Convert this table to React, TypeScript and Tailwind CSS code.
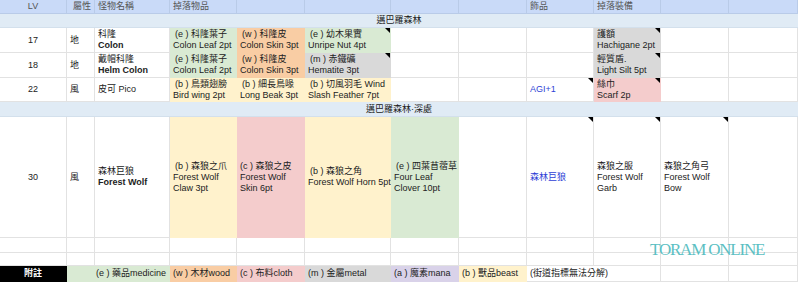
import { ReactNode } from "react";

// cell colours (bg + matching border so coloured blocks look seamless)
const W = "bg-white border-[#e2e2e2]";
const G = "bg-[#d9ead3] border-[#d9ead3]";
const O = "bg-[#f9cda4] border-[#f9cda4]";
const P = "bg-[#f4cccc] border-[#f4cccc]";
const Y = "bg-[#fff2cc] border-[#fff2cc]";
const S = "bg-[#d9d9d9] border-[#d9d9d9]";
const V = "bg-[#d9d2e9] border-[#d9d2e9]";
const H = "bg-[#c9daf8] border-[#b9cbe8]";

type CellProps = {
    children?: ReactNode;
    className?: string;
    note?: boolean;
};

function Cell({ children, className = W, note = false }: CellProps) {
    return (
        <div
            className={`relative flex items-center whitespace-nowrap border-r border-b px-[3px] ${className}`}
        >
            <div>{children}</div>
            {note && (
                <span className="absolute right-0 top-0 h-0 w-0 border-l-[5px] border-t-[5px] border-l-transparent border-t-black" />
            )}
        </div>
    );
}

function Item({ a, b }: { a: string; b: string }) {
    return (
        <>
            <div className="pl-[2px]">{a}</div>
            <div>{b}</div>
        </>
    );
}

function Blank({ n }: { n: number }) {
    return (
        <>
            {Array.from({ length: n }).map((_, i) => (
                <Cell key={i} />
            ))}
        </>
    );
}

export default function App() {
    return (
        <div className="relative h-[282px] w-[798px] overflow-hidden bg-white text-[9px] leading-[11px] text-[#222] [font-family:'Liberation_Sans','Noto_Sans_CJK_TC',sans-serif]">
            <div className="grid grid-cols-[67px_28px_75px_67px_68px_86px_68px_68px_67px_67px_68px_69px] grid-rows-[14px_14px_25px_25px_24px_15px_121px_15px_13px_16px]">
                {/* header */}
                <Cell className={`${H} justify-center text-[#555]`}>LV</Cell>
                <Cell className={`${H} text-[#555]`}>
                    <span className="pl-[3px]">屬性</span>
                </Cell>
                <Cell className={`${H} text-[#555]`}>怪物名稱</Cell>
                <Cell className={`${H} text-[#555]`}>掉落物品</Cell>
                <Cell className={H} />
                <Cell className={H} />
                <Cell className={H} />
                <Cell className={H} />
                <Cell className={`${H} text-[#555]`}>飾品</Cell>
                <Cell className={`${H} text-[#555]`}>掉落裝備</Cell>
                <Cell className={H} />
                <Cell className={H} />

                {/* section */}
                <div className="col-span-12 flex items-center justify-center border-b border-[#d3e0ec] bg-[#e0ebf5]">
                    邁巴羅森林
                </div>

                {/* 17 */}
                <Cell className={`${W} justify-center`}>17</Cell>
                <Cell className={`${W} text-[#222]`}>地</Cell>
                <Cell>
                    <div>科隆</div>
                    <div className="font-bold">Colon</div>
                </Cell>
                <Cell className={G}>
                    <Item a="(e ) 科隆葉子" b="Colon Leaf 2pt" />
                </Cell>
                <Cell className={O}>
                    <Item a="(w ) 科隆皮" b="Colon Skin 3pt" />
                </Cell>
                <Cell className={G} note>
                    <Item a="(e ) 幼木果實" b="Unripe Nut 4pt" />
                </Cell>
                <Blank n={3} />
                <Cell className={S} note>
                    <div>護額</div>
                    <div>Hachigane 2pt</div>
                </Cell>
                <Blank n={2} />

                {/* 18 */}
                <Cell className={`${W} justify-center`}>18</Cell>
                <Cell className={`${W} text-[#222]`}>地</Cell>
                <Cell>
                    <div>戴帽科隆</div>
                    <div className="font-bold">Helm Colon</div>
                </Cell>
                <Cell className={G}>
                    <Item a="(e ) 科隆葉子" b="Colon Leaf 2pt" />
                </Cell>
                <Cell className={O}>
                    <Item a="(w ) 科隆皮" b="Colon Skin 3pt" />
                </Cell>
                <Cell className={S} note>
                    <Item a="(m ) 赤鐵礦" b="Hematite 3pt" />
                </Cell>
                <Blank n={3} />
                <Cell className={S} note>
                    <div>輕質盾.</div>
                    <div>Light Silt 5pt</div>
                </Cell>
                <Blank n={2} />

                {/* 22 */}
                <Cell className={`${W} justify-center`}>22</Cell>
                <Cell>風</Cell>
                <Cell>皮可 Pico</Cell>
                <Cell className={Y}>
                    <Item a="(b ) 鳥類翅膀" b="Bird wing 2pt" />
                </Cell>
                <Cell className={Y}>
                    <Item a="(b ) 細長鳥喙" b="Long Beak 3pt" />
                </Cell>
                <Cell className={Y}>
                    <Item a="(b ) 切風羽毛 Wind" b="Slash Feather 7pt" />
                </Cell>
                <Blank n={2} />
                <Cell className={`${W} text-[#2f3fd6]`} note>
                    AGI+1
                </Cell>
                <Cell className={P} note>
                    <div>絲巾</div>
                    <div>Scarf 2p</div>
                </Cell>
                <Blank n={2} />

                {/* section */}
                <div className="col-span-12 flex items-center justify-center border-b border-[#d3e0ec] bg-[#e0ebf5]">
                    邁巴羅森林·深處
                </div>

                {/* 30 */}
                <Cell className={`${W} justify-center`}>30</Cell>
                <Cell>風</Cell>
                <Cell>
                    <div>森林巨狼</div>
                    <div className="font-bold">Forest Wolf</div>
                </Cell>
                <Cell className={Y}>
                    <div className="pl-[2px]">(b ) 森狼之爪</div>
                    <div>Forest Wolf</div>
                    <div>Claw 3pt</div>
                </Cell>
                <Cell className={P}>
                    <div>(c ) 森狼之皮</div>
                    <div>Forest Wolf</div>
                    <div>Skin 6pt</div>
                </Cell>
                <Cell className={Y}>
                    <Item a="(b ) 森狼之角" b="Forest Wolf Horn 5pt" />
                </Cell>
                <Cell className={G}>
                    <div className="pl-[2px]">(e ) 四葉苜蓿草</div>
                    <div>Four Leaf</div>
                    <div>Clover 10pt</div>
                </Cell>
                <Cell />
                <Cell className={`${W} text-[#2f3fd6]`} note>
                    森林巨狼
                </Cell>
                <Cell note>
                    <div>森狼之服</div>
                    <div>Forest Wolf</div>
                    <div>Garb</div>
                </Cell>
                <Cell note>
                    <div>森狼之角弓</div>
                    <div>Forest Wolf</div>
                    <div>Bow</div>
                </Cell>
                <Cell />

                {/* empty rows */}
                <Blank n={12} />
                <Blank n={12} />

                {/* notes row */}
                <Cell className="justify-center border-black bg-black font-bold text-white">
                    附註
                </Cell>
                <Cell className={G} />
                <Cell className={`${G} justify-end`}>(e ) 藥品medicine</Cell>
                <Cell className={O}>(w ) 木材wood</Cell>
                <Cell className={P}>(c ) 布料cloth</Cell>
                <Cell className={S}>(m ) 金屬metal</Cell>
                <Cell className={V}>(a ) 魔素mana</Cell>
                <Cell className={Y}>(b ) 獸品beast</Cell>
                <div className="col-span-2 flex items-center whitespace-nowrap border-r border-b border-[#e2e2e2] px-[3px]">
                    (街道指標無法分解)
                </div>
                <Cell />
                <Cell />
            </div>

            {/* watermark */}
            <div className="absolute left-[650px] top-[241px] text-[17px] leading-[17px] tracking-[-1.2px] text-[#5cbfc3] [font-family:'Liberation_Serif',serif]">
                TORAM ONLINE
            </div>
        </div>
    );
}
